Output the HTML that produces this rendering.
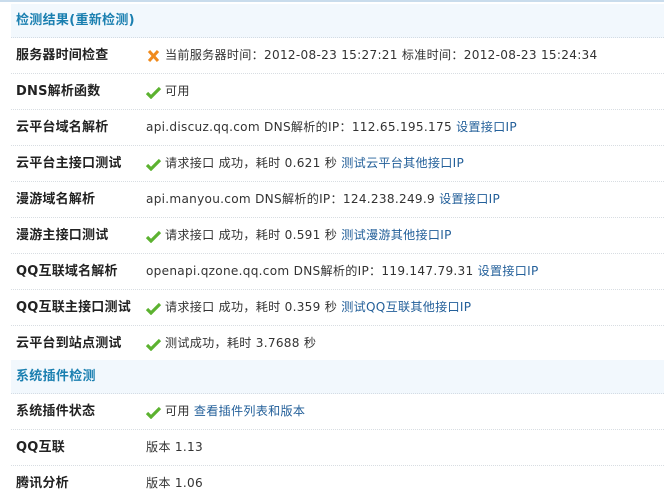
<!DOCTYPE html>
<html><head><meta charset="utf-8"><style>
body{margin:0;width:664px;height:493px;overflow:hidden;background:#fff;font-family:"DejaVu Sans","Noto Sans CJK SC",sans-serif;font-size:12px;color:#333}
.top{position:absolute;left:0;top:0;width:664px;height:2px;background:#c9dcec}
.hd{position:absolute;left:11px;width:653px;background:#f2f8fd;color:#1a7fb0;font-weight:bold;line-height:33px;padding-left:5px;box-sizing:border-box;border-bottom:1px dotted #d4dce4;font-size:13px;letter-spacing:0.3px}
.r{position:absolute;left:11px;width:653px;height:36px;border-bottom:1px dotted #d8dde2;box-sizing:border-box;line-height:35px}
.l{position:absolute;left:5px;font-weight:bold;color:#222;font-size:13px;letter-spacing:0.2px}
.v{position:absolute;left:135px;white-space:nowrap;font-size:12.1px;letter-spacing:0.28px}
a{color:#24609a;text-decoration:none}
.ic{display:inline-block;width:16px;vertical-align:middle;margin-right:3px}
</style></head><body>
<div class="top"></div>
<div class="hd" style="top:4px;height:34px">检测结果(重新检测)</div>
<div class="r" style="top:38px"><span class="l">服务器时间检查</span><span class="v"><svg class="ic" width="16" height="14" viewBox="0 0 16 14"><path d="M3 2L12 12M12 2L3 12" stroke="#f08a1c" stroke-width="3"/></svg>当前服务器时间：2012-08-23 15:27:21 标准时间：2012-08-23 15:24:34</span></div>
<div class="r" style="top:74px"><span class="l">DNS解析函数</span><span class="v"><svg class="ic" width="16" height="14" viewBox="0 0 16 14"><path d="M1 8L5 12L14 3" stroke="#5cb230" stroke-width="3.2" fill="none"/></svg>可用</span></div>
<div class="r" style="top:110px"><span class="l">云平台域名解析</span><span class="v">api.discuz.qq.com DNS解析的IP：112.65.195.175 <a>设置接口IP</a></span></div>
<div class="r" style="top:146px"><span class="l">云平台主接口测试</span><span class="v"><svg class="ic" width="16" height="14" viewBox="0 0 16 14"><path d="M1 8L5 12L14 3" stroke="#5cb230" stroke-width="3.2" fill="none"/></svg>请求接口 成功，耗时 0.621 秒 <a>测试云平台其他接口IP</a></span></div>
<div class="r" style="top:182px"><span class="l">漫游域名解析</span><span class="v">api.manyou.com DNS解析的IP：124.238.249.9 <a>设置接口IP</a></span></div>
<div class="r" style="top:218px"><span class="l">漫游主接口测试</span><span class="v"><svg class="ic" width="16" height="14" viewBox="0 0 16 14"><path d="M1 8L5 12L14 3" stroke="#5cb230" stroke-width="3.2" fill="none"/></svg>请求接口 成功，耗时 0.591 秒 <a>测试漫游其他接口IP</a></span></div>
<div class="r" style="top:254px"><span class="l">QQ互联域名解析</span><span class="v">openapi.qzone.qq.com DNS解析的IP：119.147.79.31 <a>设置接口IP</a></span></div>
<div class="r" style="top:290px"><span class="l">QQ互联主接口测试</span><span class="v"><svg class="ic" width="16" height="14" viewBox="0 0 16 14"><path d="M1 8L5 12L14 3" stroke="#5cb230" stroke-width="3.2" fill="none"/></svg>请求接口 成功，耗时 0.359 秒 <a>测试QQ互联其他接口IP</a></span></div>
<div class="r" style="top:326px;border-bottom:none"><span class="l">云平台到站点测试</span><span class="v"><svg class="ic" width="16" height="14" viewBox="0 0 16 14"><path d="M1 8L5 12L14 3" stroke="#5cb230" stroke-width="3.2" fill="none"/></svg>测试成功，耗时 3.7688 秒</span></div>
<div class="hd" style="top:360px;height:34px">系统插件检测</div>
<div class="r" style="top:394px"><span class="l">系统插件状态</span><span class="v"><svg class="ic" width="16" height="14" viewBox="0 0 16 14"><path d="M1 8L5 12L14 3" stroke="#5cb230" stroke-width="3.2" fill="none"/></svg>可用 <a>查看插件列表和版本</a></span></div>
<div class="r" style="top:430px"><span class="l">QQ互联</span><span class="v">版本 1.13</span></div>
<div class="r" style="top:466px;border-bottom:none"><span class="l">腾讯分析</span><span class="v">版本 1.06</span></div>
</body></html>
